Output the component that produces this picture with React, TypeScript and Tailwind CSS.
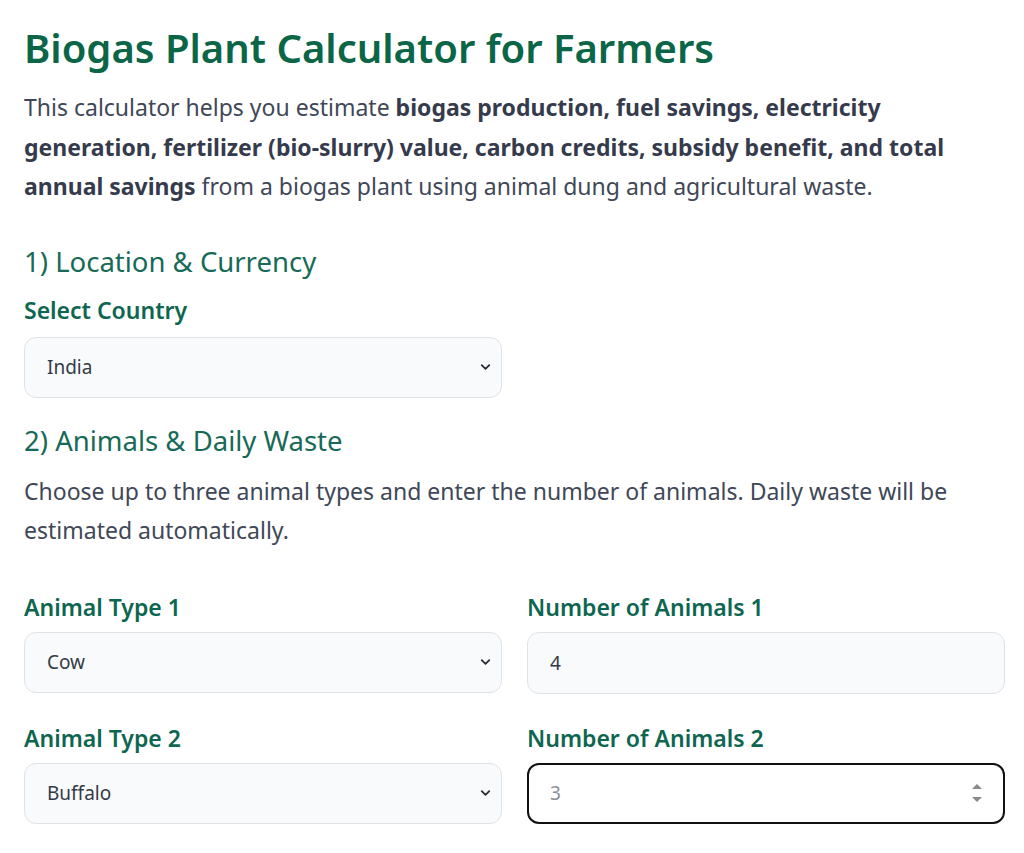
import { ChevronDown } from 'lucide-react';

const font = { fontFamily: '"Noto Sans", "Open Sans", sans-serif' };

function SelectField({ label, value, options, gap }: { label: string; value: string; options: string[]; gap: string }) {
  return (
    <div className="flex flex-col">
      <label className="text-[23px] font-semibold leading-[32px] text-[#0d6650]">{label}</label>
      <div className={`relative ${gap}`}>
        <select
          defaultValue={value}
          className="w-full h-[61px] appearance-none rounded-[12px] border border-[#dfe3e8] bg-[#f9fafb] pl-[22px] pr-10 text-[19px] text-[#343a46] outline-none"
        >
          {options.map((o) => (
            <option key={o}>{o}</option>
          ))}
        </select>
        <ChevronDown size={15} strokeWidth={3} className="pointer-events-none absolute right-[9px] top-1/2 -translate-y-1/2 text-[#2b2f38]" />
      </div>
    </div>
  );
}

function NumberField({ label, value, focused }: { label: string; value: string; focused?: boolean }) {
  return (
    <div className="flex flex-col">
      <label className="text-[23px] font-semibold leading-[32px] text-[#0d6650]">{label}</label>
      <div className="relative mt-[9px]">
        {focused ? (
          <>
            <input
              type="text"
              placeholder={value}
              className="w-full h-[61px] rounded-[12px] border-2 border-[#111111] bg-white pl-[21px] pr-10 text-[19px] text-[#343a46] placeholder:text-[#8a8f98] outline-none"
            />
            <svg width="14" height="30" viewBox="0 0 14 30" className="pointer-events-none absolute right-[21px] top-1/2 -translate-y-1/2">
              <path d="M2 11 L7 6 L12 11 Z" fill="#8a8a8a" />
              <path d="M2 19 L7 24 L12 19 Z" fill="#8a8a8a" />
            </svg>
          </>
        ) : (
          <input
            type="text"
            defaultValue={value}
            className="w-full h-[62px] rounded-[12px] border border-[#dfe3e8] bg-[#f9fafb] pl-[22px] pr-4 text-[19px] text-[#343a46] outline-none"
          />
        )}
      </div>
    </div>
  );
}

export default function App() {
  const countries = ['India', 'Bangladesh', 'Nepal', 'Pakistan', 'Sri Lanka', 'Kenya'];
  const animals = ['Cow', 'Buffalo', 'Goat', 'Pig', 'Poultry', 'None'];

  return (
    <div className="min-h-screen bg-white" style={font}>
      <div className="ml-6 w-[981px] pt-[24px]">
        <h1 className="text-[40px] font-semibold leading-[48px] text-[#0b6647]">Biogas Plant Calculator for Farmers</h1>
        <p className="mt-[16px] text-[23px] leading-[39.5px] text-[#404757]">
          This calculator helps you estimate{' '}
          <strong className="font-bold text-[#353b4c]">
            biogas production, fuel savings, electricity generation, fertilizer (bio-slurry) value, carbon credits, subsidy benefit, and total annual savings
          </strong>{' '}
          from a biogas plant using animal dung and agricultural waste.
        </p>

        <h2 className="mt-[39px] text-[27.5px] font-normal leading-[32px] text-[#176a57]">1) Location &amp; Currency</h2>
        <div className="mt-[16px] w-[478px]">
          <SelectField label="Select Country" value="India" options={countries} gap="mt-[11px]" />
        </div>

        <h2 className="mt-[27px] text-[27.5px] font-normal leading-[32px] text-[#176a57]">2) Animals &amp; Daily Waste</h2>
        <p className="mt-[15px] text-[23px] leading-[39.5px] text-[#404757]">
          Choose up to three animal types and enter the number of animals. Daily waste will be estimated automatically.
        </p>

        <div className="mt-[40px] grid grid-cols-2 gap-x-[25px] gap-y-[28px]">
          <SelectField label="Animal Type 1" value="Cow" options={animals} gap="mt-[9px]" />
          <NumberField label="Number of Animals 1" value="4" />
          <SelectField label="Animal Type 2" value="Buffalo" options={animals} gap="mt-[9px]" />
          <NumberField label="Number of Animals 2" value="3" focused />
        </div>
      </div>
    </div>
  );
}
